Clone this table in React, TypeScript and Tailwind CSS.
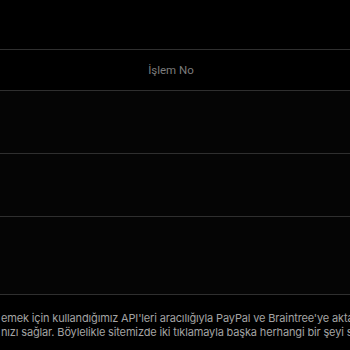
import React from 'react';

const rows = [63, 63];

export default function App() {
  return (
    <div className="w-[350px] h-[350px] overflow-hidden bg-black" style={{ fontFamily: 'Inter, "Noto Sans", sans-serif' }}>
      <div className="h-[49px]" />
      <div className="border-t border-b border-[#2f2f2f] h-[42px] flex items-center justify-center">
        <span className="text-[11.5px] text-[#7c7c7c] ml-[-8px] mt-[1px]" style={{ fontFamily: 'Roboto, sans-serif' }}>
          İşlem No
        </span>
      </div>
      {rows.map((h, i) => (
        <div key={i} className="border-b border-[#2f2f2f] bg-[#050505]" style={{ height: h }} />
      ))}
      <div className="h-[78px] border-b border-[#2f2f2f] bg-[#050505]" />
      <div className="pt-[17px] text-[11px] tracking-[-0.15px] leading-[13.5px] text-[#a3a3a3] whitespace-nowrap">
        <div className="ml-[1px]">emek için kullandığımız API'leri aracılığıyla PayPal ve Braintree'ye aktarır</div>
        <div className="ml-[1px]">nızı sağlar. Böylelikle sitemizde iki tıklamayla başka herhangi bir şeyi satın</div>
      </div>
    </div>
  );
}
